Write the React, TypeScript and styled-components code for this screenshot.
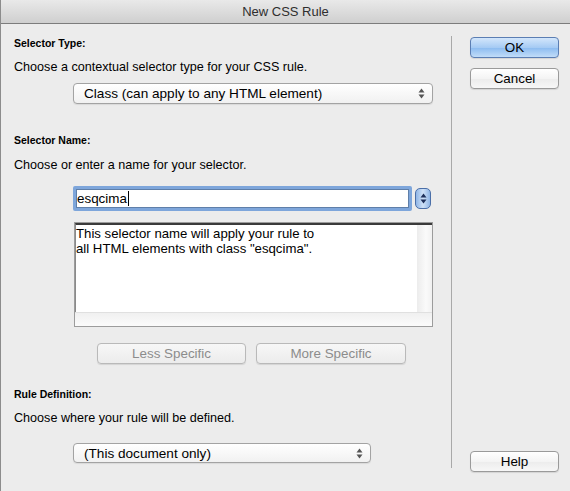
import React from "react";
import styled, { createGlobalStyle } from "styled-components";

const GlobalStyle = createGlobalStyle`
  html, body {
    margin: 0;
    padding: 0;
    background: #ececec;
  }
  body {
    font-family: "Liberation Sans", Arial, sans-serif;
    color: #000;
  }
`;

const Window = styled.div`
  width: 570px;
  height: 491px;
  box-sizing: border-box;
  background: #ececec;
  border-left: 1px solid #8c8c8c;
  display: flex;
  flex-direction: column;
  overflow: hidden;
`;

const TitleBar = styled.div`
  height: 23px;
  flex-shrink: 0;
  background: linear-gradient(#e9e9e9, #cfcfcf);
  border-bottom: 1px solid #7c7c7c;
  display: flex;
  align-items: center;
  justify-content: center;
  font-size: 13px;
  color: #2e2e2e;
`;

const Body = styled.div`
  flex: 1;
  display: flex;
`;

const LeftPane = styled.div`
  width: 437px;
  padding: 12px 0 0 13px;
  display: flex;
  flex-direction: column;
  align-items: flex-start;
`;

const Divider = styled.div`
  width: 1px;
  background: #a9a9a9;
  margin: 12px 0 23px;
`;

const RightPane = styled.div`
  flex: 1;
  padding: 13px 0 19px 18px;
  display: flex;
  flex-direction: column;
  gap: 10px;
`;

const SectionLabel = styled.div<{ $top?: number }>`
  font-size: 10.5px;
  font-weight: bold;
  line-height: 14px;
  margin-top: ${({ $top }) => $top ?? 0}px;
`;

const Desc = styled.div<{ $top: number }>`
  font-size: 12.6px;
  line-height: 16px;
  margin-top: ${({ $top }) => $top}px;
`;

const Select = styled.div<{ $top: number; $width: number; $height: number }>`
  margin: ${({ $top }) => $top}px 0 0 59px;
  width: ${({ $width }) => $width}px;
  height: ${({ $height }) => $height}px;
  box-sizing: border-box;
  border: 1px solid #a3a3a3;
  border-radius: 4px;
  background: linear-gradient(#ffffff, #f1f1f1);
  box-shadow: 0 1px 1px rgba(0, 0, 0, 0.08);
  display: flex;
  align-items: center;
  justify-content: space-between;
  padding: 0 7px 0 10px;
  font-size: 13.6px;
`;

const Arrows = styled.svg`
  width: 7px;
  height: 11px;
`;

const InputRow = styled.div`
  margin: 13px 0 0 59px;
  display: flex;
  align-items: center;
  gap: 3px;
`;

const TextInput = styled.div`
  width: 339px;
  height: 25px;
  box-sizing: border-box;
  border: 3px solid #7ea6db;
  border-radius: 2px;
  background: #fff;
  box-shadow: inset 0 0 0 1px #5f7fa9;
  display: flex;
  align-items: center;
  padding-left: 1px;
  font-size: 13.4px;
`;

const Caret = styled.span`
  display: inline-block;
  width: 1px;
  height: 15px;
  background: #000;
  margin-left: 1px;
`;

const Stepper = styled.div`
  width: 16px;
  height: 21px;
  box-sizing: border-box;
  border: 1px solid #4b6fa8;
  border-radius: 5px;
  background: linear-gradient(90deg, #8fb5e6, #cfe1f7 50%, #8fb5e6);
  display: flex;
  align-items: center;
  justify-content: center;
`;

const InfoBox = styled.div`
  margin: 11px 0 0 60px;
  width: 359px;
  height: 105px;
  box-sizing: border-box;
  border: 1px solid #9c9c9c;
  background: #f4f4f4;
  display: grid;
  grid-template-columns: 1fr 15px;
  grid-template-rows: 1fr 14px;
`;

const InfoText = styled.div`
  background: #fff;
  border-top: 2px solid #3a3a3a;
  border-left: 1px solid #8a8a8a;
  padding: 1px 0 0 0;
  font-size: 13.2px;
  line-height: 15px;
`;

const VScroll = styled.div`
  background: linear-gradient(90deg, #ececec, #fafafa 60%, #f1f1f1);
  border-top: 2px solid #3a3a3a;
`;

const HScroll = styled.div`
  grid-column: 1 / span 2;
  background: linear-gradient(#f0f0f0, #fbfbfb);
  border-top: 1px solid #e0e0e0;
`;

const SpecificRow = styled.div`
  margin: 16px 0 0 83px;
  display: flex;
  gap: 10px;
`;

const Button = styled.div<{ $primary?: boolean; $disabled?: boolean; $width?: number }>`
  width: ${({ $width }) => $width ?? 89}px;
  height: 21px;
  box-sizing: border-box;
  border: 1px solid ${({ $primary, $disabled }) =>
    $primary ? "#5b7eb3" : $disabled ? "#b9b9b9" : "#9a9a9a"};
  border-radius: 4px;
  background: ${({ $primary, $disabled }) =>
    $primary
      ? "linear-gradient(#d3e6fb, #a6cbf4 50%, #8bbbf0 51%, #c1dcf8)"
      : $disabled
      ? "linear-gradient(#f7f7f7, #ececec)"
      : "linear-gradient(#ffffff, #f4f4f4 50%, #ececec 51%, #f7f7f7)"};
  box-shadow: 0 1px 1px rgba(0, 0, 0, 0.1);
  color: ${({ $disabled }) => ($disabled ? "#8c8c8c" : "#000")};
  font-size: 13.4px;
  display: flex;
  align-items: center;
  justify-content: center;
`;

const Spacer = styled.div`
  flex: 1;
`;

const UpDown = ({ color = "#555" }: { color?: string }) => (
  <Arrows viewBox="0 0 7 11">
    <path d="M3.5 0.5 L6.5 4.5 H0.5 Z" fill={color} />
    <path d="M3.5 10.5 L6.5 6.5 H0.5 Z" fill={color} />
  </Arrows>
);

export default function App() {
  return (
    <>
      <GlobalStyle />
      <Window>
        <TitleBar>New CSS Rule</TitleBar>
        <Body>
          <LeftPane>
            <SectionLabel>Selector Type:</SectionLabel>
            <Desc $top={9}>Choose a contextual selector type for your CSS rule.</Desc>
            <Select $top={8} $width={360} $height={21}>
              <span>Class (can apply to any HTML element)</span>
              <UpDown />
            </Select>

            <SectionLabel $top={29}>Selector Name:</SectionLabel>
            <Desc $top={10}>Choose or enter a name for your selector.</Desc>
            <InputRow>
              <TextInput>
                esqcima
                <Caret />
              </TextInput>
              <Stepper>
                <UpDown color="#1d2f5a" />
              </Stepper>
            </InputRow>
            <InfoBox>
              <InfoText>
                This selector name will apply your rule to
                <br />
                all HTML elements with class "esqcima".
              </InfoText>
              <VScroll />
              <HScroll />
            </InfoBox>
            <SpecificRow>
              <Button $disabled $width={149}>Less Specific</Button>
              <Button $disabled $width={150}>More Specific</Button>
            </SpecificRow>

            <SectionLabel $top={23}>Rule Definition:</SectionLabel>
            <Desc $top={9}>Choose where your rule will be defined.</Desc>
            <Select $top={17} $width={298} $height={20}>
              <span>(This document only)</span>
              <UpDown />
            </Select>
          </LeftPane>
          <Divider />
          <RightPane>
            <Button $primary>OK</Button>
            <Button>Cancel</Button>
            <Spacer />
            <Button>Help</Button>
          </RightPane>
        </Body>
      </Window>
    </>
  );
}
